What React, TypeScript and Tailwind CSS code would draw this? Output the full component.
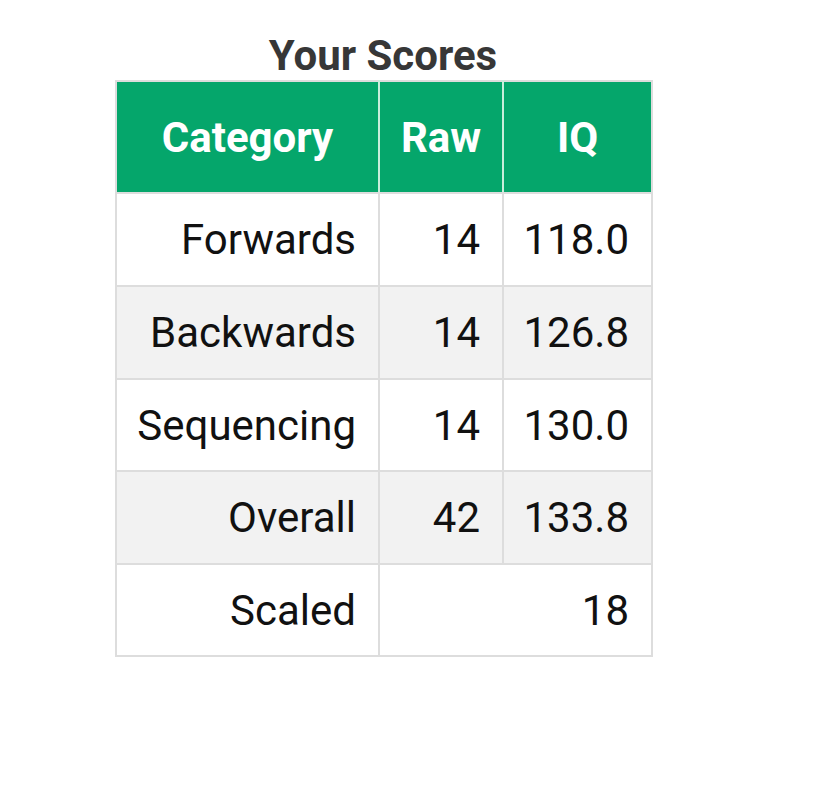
const rows = [
  { category: 'Forwards', raw: '14', iq: '118.0', h: 'h-[93px]' },
  { category: 'Backwards', raw: '14', iq: '126.8', h: 'h-[93px]' },
  { category: 'Sequencing', raw: '14', iq: '130.0', h: 'h-[92px]' },
  { category: 'Overall', raw: '42', iq: '133.8', h: 'h-[93px]' },
]

const cell = 'border-2 border-[#dddddd] pr-[22px] text-right align-middle'
const head = 'border-2 border-[#dddddd] text-center align-middle font-bold text-white'

const App = () => {
  return (
    <div className="min-h-[790px] bg-white font-['Roboto',sans-serif]">
      <div className="w-[536px] ml-[115px] pt-[32px]">
        <h1 className="text-center text-[42px] leading-[48px] font-bold text-[#373737]">Your Scores</h1>
        <table className="w-[536px] border-collapse table-fixed text-[42px] text-[#111111]">
          <colgroup>
            <col className="w-[263px]" />
            <col className="w-[124px]" />
            <col className="w-[149px]" />
          </colgroup>
          <thead>
            <tr className="h-[112px] bg-[#05a66b]">
              <th className={`${head} border-r-[#c9eedb]`}>Category</th>
              <th className={`${head} border-r-[#c9eedb]`}>Raw</th>
              <th className={head}>IQ</th>
            </tr>
          </thead>
          <tbody>
            {rows.map((row, i) => (
              <tr key={row.category} className={`${row.h} ${i % 2 === 1 ? 'bg-[#f2f2f2]' : 'bg-white'}`}>
                <td className={cell}>{row.category}</td>
                <td className={cell}>{row.raw}</td>
                <td className={cell}>{row.iq}</td>
              </tr>
            ))}
            <tr className="h-[92px] bg-white">
              <td className={cell}>Scaled</td>
              <td className={cell} colSpan={2}>18</td>
            </tr>
          </tbody>
        </table>
      </div>
    </div>
  )
}

export default App
